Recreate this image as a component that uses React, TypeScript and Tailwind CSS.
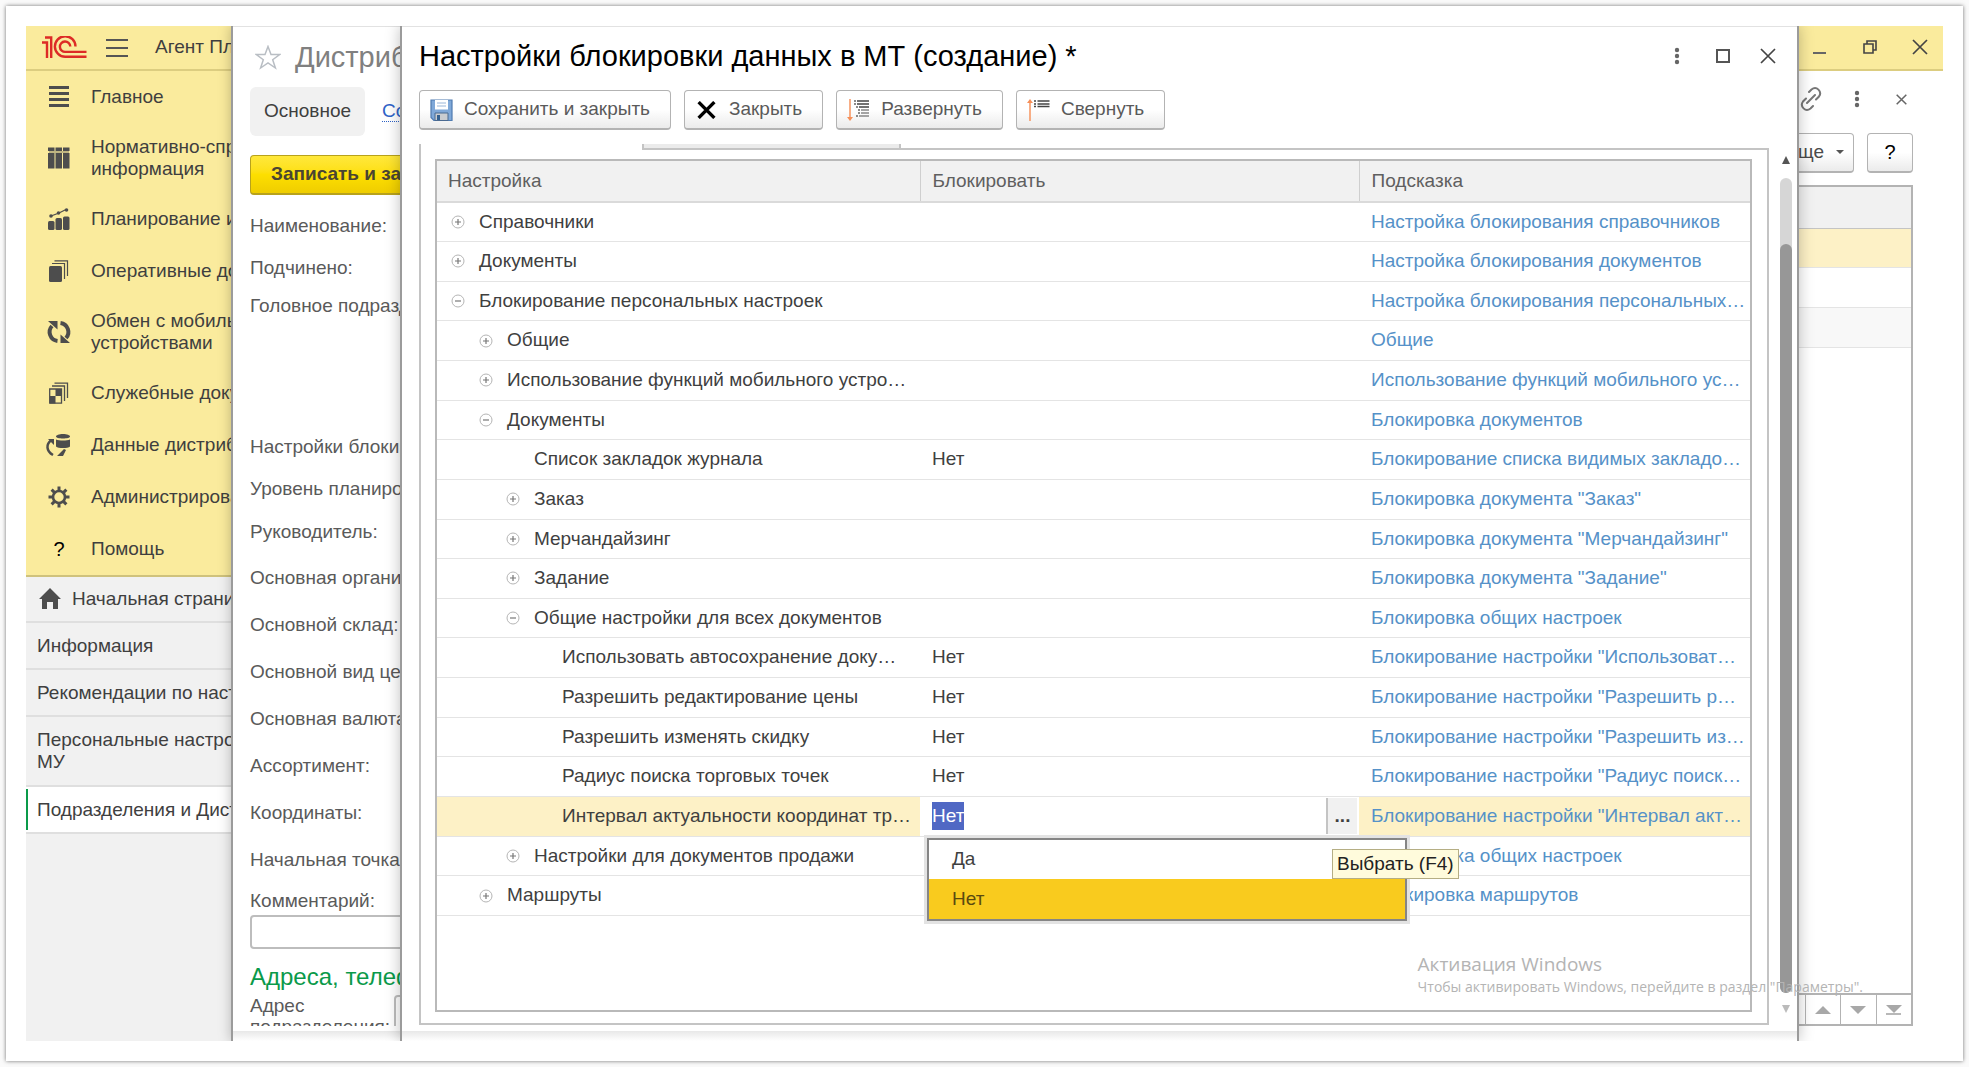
import { useEffect, useRef } from "react";
import type { ReactNode } from "react";

type Row = {
  name: string;
  level: number;
  toggle?: "plus" | "minus";
  value?: string;
  hint: string;
  editing?: boolean;
};

const rows: Row[] = [
  { name: "Справочники", level: 0, toggle: "plus", hint: "Настройка блокирования справочников" },
  { name: "Документы", level: 0, toggle: "plus", hint: "Настройка блокирования документов" },
  { name: "Блокирование персональных настроек", level: 0, toggle: "minus", hint: "Настройка блокирования персональных…" },
  { name: "Общие", level: 1, toggle: "plus", hint: "Общие" },
  { name: "Использование функций мобильного устро…", level: 1, toggle: "plus", hint: "Использование функций мобильного ус…" },
  { name: "Документы", level: 1, toggle: "minus", hint: "Блокировка документов" },
  { name: "Список закладок журнала", level: 2, value: "Нет", hint: "Блокирование списка видимых закладо…" },
  { name: "Заказ", level: 2, toggle: "plus", hint: 'Блокировка документа "Заказ"' },
  { name: "Мерчандайзинг", level: 2, toggle: "plus", hint: 'Блокировка документа "Мерчандайзинг"' },
  { name: "Задание", level: 2, toggle: "plus", hint: 'Блокировка документа "Задание"' },
  { name: "Общие настройки для всех документов", level: 2, toggle: "minus", hint: "Блокировка общих настроек" },
  { name: "Использовать автосохранение доку…", level: 3, value: "Нет", hint: 'Блокирование настройки "Использоват…' },
  { name: "Разрешить редактирование цены", level: 3, value: "Нет", hint: 'Блокирование настройки "Разрешить р…' },
  { name: "Разрешить изменять скидку", level: 3, value: "Нет", hint: 'Блокирование настройки "Разрешить из…' },
  { name: "Радиус поиска торговых точек", level: 3, value: "Нет", hint: 'Блокирование настройки "Радиус поиск…' },
  { name: "Интервал актуальности координат тр…", level: 3, value: "Нет", hint: 'Блокирование настройки "Интервал акт…', editing: true },
  { name: "Настройки для документов продажи", level: 2, toggle: "plus", hint: "Блокировка общих настроек" },
  { name: "Маршруты", level: 1, toggle: "plus", hint: "Блокировка маршрутов" },
];

const indents = ["pl-[14px]", "pl-[42px]", "pl-[69px]", "pl-[97px]"];

const formRows = [
  { label: "Наименование:", height: "h-[42px]" },
  { label: "Подчинено:", height: "h-[42px]" },
  { label: "Головное подразделение:", height: "h-[34px] mb-[103px]" },
  { label: "Настройки блокировки:", height: "h-[42px]" },
  { label: "Уровень планирования:", height: "h-[42px]" },
  { label: "Руководитель:", height: "h-[45px]" },
  { label: "Основная организация:", height: "h-[47px]" },
  { label: "Основной склад:", height: "h-[47px]" },
  { label: "Основной вид цен:", height: "h-[47px]" },
  { label: "Основная валюта:", height: "h-[47px]" },
  { label: "Ассортимент:", height: "h-[47px]" },
  { label: "Координаты:", height: "h-[47px]" },
  { label: "Начальная точка:", height: "h-[47px]" },
];

function MenuIcon({ name }: { name: string }) {
  return (
    <svg viewBox="0 0 22 22" className="h-[22px] w-[22px] shrink-0 overflow-visible text-[#4d4d4d]" fill="currentColor">
      {name === "main" && <path d="M1 0h20v3H1zM1 6h20v3H1zM1 12h20v3H1zM1 18h20v3H1z" />}
      {name === "books" && (
        <>
          <path d="M0 .500h6.500v3.500H0zM7.500.500H14v3.500H7.500zM15 .500h6.500v3.500H15z" />
          <path d="M0 6h6.500v15.500H0zM7.500 6H14v15.500H7.500zM15 6h6.500v15.500H15z" />
          <path d="M1 4h20v2H1z" opacity=".35" />
        </>
      )}
      {name === "chart" && (
        <>
          <rect x="0" y="13" width="6.500" height="9" rx="1.500" />
          <rect x="7.500" y="10" width="6.500" height="12" rx="1.500" />
          <rect x="15" y="8.500" width="6.500" height="13.500" rx="1.500" />
          <path d="M3 8l8-3 7-3.500" fill="none" stroke="currentColor" strokeWidth="1.300" />
          <circle cx="3" cy="8" r="1.800" />
          <circle cx="10.500" cy="5" r="1.800" />
          <circle cx="18.500" cy="2" r="1.800" />
        </>
      )}
      {name === "docs" && (
        <>
          <rect x="1" y="6" width="13" height="16" rx="1.500" />
          <path d="M4 3.500h12.500V19M6.500.800h13V16" fill="none" stroke="currentColor" strokeWidth="1.200" />
        </>
      )}
      {name === "sync" && (
        <>
          <path d="M9.500 20A9 9 0 0 1 4 5M12.500 2a9 9 0 0 1 5.500 15" fill="none" stroke="currentColor" strokeWidth="4" />
          <path d="M0 0h9.500v8.500zM22 22h-9.500v-8.500z" />
        </>
      )}
      {name === "service" && (
        <>
          <path d="M1.700 7h11.800v14.200H1.700zM4 4h12.500v15M6.500 1.200h13V16" fill="none" stroke="currentColor" strokeWidth="1.300" />
          <path d="M7.500 7H14v7H7.500zM2 14h5.500v7.500H2z" />
        </>
      )}
      {name === "data" && (
        <>
          <path d="M8 2.500C8 1.300 11 0 15 0s7 1.300 7 2.500S19 4.500 15 4.500 8 3.700 8 2.500z" />
          <path d="M8 5.500c3 1.300 11 1.300 14 0v7c-2 2-12 2-14 0z" />
          <path d="M5 21C-2 17-2 10 3 6.500" fill="none" stroke="currentColor" strokeWidth="2.500" />
          <path d="M0 5h6v6zM9 22l7-7 2 1-3 6z" />
        </>
      )}
      {name === "gear" && (
        <>
          <circle cx="11" cy="11" r="6" fill="none" stroke="currentColor" strokeWidth="2.600" />
          <path
            d="M11 .500v4M11 17.500v4M.500 11h4M17.500 11h4M3.600 3.600l2.800 2.800M15.600 15.600l2.800 2.800M3.600 18.400l2.800-2.800M15.600 6.400l2.800-2.800"
            stroke="currentColor"
            strokeWidth="3"
          />
        </>
      )}
      {name === "home" && <path d="M11 0l11 11h-3v10h-5v-7H8v7H3V11H0z" />}
    </svg>
  );
}

const menu = [
  { icon: "main", label: "Главное" },
  { icon: "books", label: "Нормативно-справочная", second: "информация" },
  { icon: "chart", label: "Планирование и" },
  { icon: "docs", label: "Оперативные документы" },
  { icon: "sync", label: "Обмен с мобильными", second: "устройствами" },
  { icon: "service", label: "Служебные документы" },
  { icon: "data", label: "Данные дистрибьюторов" },
  { icon: "gear", label: "Администрирование" },
  { icon: "help", label: "Помощь" },
];

function Logo() {
  return (
    <svg viewBox="0 0 45 23" className="h-[23px] w-[45px] shrink-0" fill="none" stroke="#dd2b26" strokeWidth="2.400" aria-label="1С">
      <path d="M0 6.500h5V22M3 1.500h6.200V22" />
      <path d="M33.500 10.500A10.300 10.300 0 1 0 23.500 20.800H44.500" />
      <path d="M28.300 10.500A5.200 5.200 0 1 0 23.500 15.900H44.500" />
    </svg>
  );
}

function Sidebar() {
  return (
    <aside className="flex w-[205px] shrink-0 flex-col overflow-hidden whitespace-nowrap bg-[#f1f1f1] text-[#3f3f3f]">
      <div className="flex h-[45px] shrink-0 items-center border-b-2 border-[#dccd80] bg-[#faeb9d] pl-4">
        <Logo />
        <button type="button" aria-label="Меню" className="ml-[19px] flex w-[22px] shrink-0 flex-col gap-[6px]">
          <span className="h-[2px] bg-[#555]" />
          <span className="h-[2px] bg-[#555]" />
          <span className="h-[2px] bg-[#555]" />
        </button>
        <span className="ml-[27px]">Агент Плюс</span>
      </div>
      <nav className="shrink-0 border-b-2 border-[#cfc27c] bg-[#faeb9d]">
        {menu.map((item) => (
          <a
            key={item.label}
            href="#"
            className={item.second ? "flex h-[70px] items-center gap-[21px] pl-[22px]" : "flex h-[52px] items-center gap-[21px] pl-[22px]"}
          >
            {item.icon === "help" ? (
              <span className="w-[22px] text-center text-xl text-black">?</span>
            ) : (
              <MenuIcon name={item.icon} />
            )}
            <span className="leading-[22px]">
              {item.label}
              {item.second && <span className="block">{item.second}</span>}
            </span>
          </a>
        ))}
      </nav>
      <nav className="leading-[22px]">
        <a href="#" className="flex h-[46px] items-center gap-[11px] border-b-2 border-[#dfdfdf] pl-[13px]">
          <MenuIcon name="home" />
          Начальная страница
        </a>
        <a href="#" className="flex h-[47px] items-center border-b-2 border-[#dfdfdf] pl-[11px]">Информация</a>
        <a href="#" className="flex h-[47px] items-center border-b-2 border-[#dfdfdf] pl-[11px]">Рекомендации по настройке</a>
        <a href="#" className="flex h-[70px] items-center border-b-2 border-[#dfdfdf] pl-[11px]">
          <span>
            Персональные настройки
            <span className="block">МУ</span>
          </span>
        </a>
        <a href="#" className="flex h-[47px] items-center border-b-2 border-[#dfdfdf] bg-white py-[2px]">
          <span className="flex h-full items-center border-l-2 border-[#0a9a4a] pl-[9px]">Подразделения и Дистрибьюторы</span>
        </a>
      </nav>
    </aside>
  );
}

function FormWindow() {
  return (
    <section className="z-10 flex w-[169px] shrink-0 flex-col border-l-2 border-[#9b9b9b] bg-white shadow-[0_0_12px_rgba(0,0,0,0.25)]">
      <div className="flex min-h-0 flex-1 flex-col overflow-hidden whitespace-nowrap border-t border-[#e2e2e2] pl-[17px] text-[#5a5a5a]">
        <div className="flex h-[60px] shrink-0 items-center gap-[14px] pl-[5px]">
          <svg viewBox="0 0 26 25" className="h-[25px] w-[26px] shrink-0" fill="none" stroke="#b9bec4" strokeWidth="1.500">
            <path d="M13 1.500l3 8h8.700l-7 5.200 2.700 8.300L13 18l-7.400 5 2.700-8.300-7-5.200H10z" />
          </svg>
          <h2 className="text-[29px] leading-[34px] text-[#808080]">Дистрибьютор</h2>
        </div>
        <div className="flex h-[49px] shrink-0 items-center gap-[17px]">
          <button type="button" className="h-full rounded-md bg-[#f1f1f1] px-[14px] text-[#3f3f3f]">Основное</button>
          <a href="#" className="border-b border-dotted border-[#2f63c8] leading-5 text-[#2f63c8]">Сотрудники</a>
        </div>
        <button
          type="button"
          className="mt-[19px] mb-[10px] h-[40px] w-[260px] shrink-0 rounded-[4px] border border-b-2 border-[#b8a21c] bg-gradient-to-b from-[#ffe83a] via-[#fddf00] to-[#efcd00] pl-5 text-left font-bold text-[#4a4532]"
        >
          Записать и закрыть
        </button>
        {formRows.map((row) => (
          <div key={row.label} className={`flex shrink-0 items-center ${row.height}`}>{row.label}</div>
        ))}
        <label htmlFor="comment" className="flex h-[31px] shrink-0 items-end leading-7">Комментарий:</label>
        <input id="comment" className="h-[34px] w-[300px] shrink-0 rounded-[4px] border-2 border-[#bdbdbd] px-2" />
        <h3 className="mt-3 h-8 shrink-0 text-[24px] leading-8 text-[#0a9a4a]">Адреса, телефоны</h3>
        <div className="mt-[2px] flex shrink-0 leading-[21px]">
          <label htmlFor="address" className="w-[144px] shrink-0">
            Адрес
            <span className="block">подразделения:</span>
          </label>
          <input id="address" className="h-[40px] w-[200px] shrink-0 rounded-[4px] border-2 border-[#bdbdbd]" />
        </div>
      </div>
      <div className="h-[5px] shrink-0" />
      <div className="h-[10px] shrink-0 bg-gradient-to-b from-[#e8e8e8] to-white" />
    </section>
  );
}

function ToolButton({ icon, children }: { icon: ReactNode; children: ReactNode }) {
  return (
    <button
      type="button"
      className="flex h-[40px] items-center gap-[11px] rounded-[4px] border border-b-2 border-[#b3b3b3] bg-gradient-to-b from-white via-white to-[#ebebeb] pr-5 pl-[10px] text-[#5a5a5a]"
    >
      {icon}
      {children}
    </button>
  );
}

function SaveIcon() {
  return (
    <svg viewBox="0 0 23 22" className="h-[22px] w-[23px]">
      <path d="M1 1h21v20.500H4L1 18.500z" fill="#7fa8d8" stroke="#4f7bb0" strokeWidth="1.200" />
      <path d="M5 1h13v9.500H5z" fill="#fff" />
      <path d="M7 4h9M7 7h9" stroke="#9ab6d8" />
      <path d="M5 14h13v7.500H5z" fill="#c9ccd0" stroke="#4b6a90" />
      <path d="M7 16h3v5H7z" fill="#33608f" />
    </svg>
  );
}

function ExpandIcon() {
  return (
    <svg viewBox="0 0 23 22" className="h-[22px] w-[23px]" fill="none">
      <path d="M3 0v19" stroke="#f79a68" strokeWidth="1.600" />
      <path d="M0 18h6L3 22z" fill="#f58e58" />
      <path d="M7 2h2M7 5h2M9 8h2M11 11h2M11 14h2M9 17h2" stroke="#666" strokeWidth="1.400" />
      <path d="M10 2h12M10 5h12M12 8h10" stroke="#444" strokeWidth="1.600" />
      <path d="M14 11h8M14 14h8M12 17h10" stroke="#888" strokeWidth="1.400" />
    </svg>
  );
}

function CollapseIcon() {
  return (
    <svg viewBox="0 0 23 22" className="h-[22px] w-[23px]" fill="none">
      <path d="M3 3v19" stroke="#f79a68" strokeWidth="1.600" />
      <path d="M0 4h6L3 0z" fill="#f58e58" />
      <path d="M7 2h2M7 5h2M7 7.500h2M10.500 2h12M10.500 5h12M10.500 7.500h12" stroke="#444" strokeWidth="1.600" />
    </svg>
  );
}

function CrossIcon({ className, width }: { className: string; width: number }) {
  return (
    <svg viewBox="0 0 16 16" className={className} fill="none" stroke="currentColor" strokeWidth={width}>
      <path d="M1 1l14 14M15 1L1 15" />
    </svg>
  );
}

function DotsIcon() {
  return (
    <svg viewBox="0 0 6 18" className="h-[18px] w-[6px]" fill="#666">
      <circle cx="3" cy="3" r="2.200" />
      <circle cx="3" cy="9" r="2.200" />
      <circle cx="3" cy="15" r="2.200" />
    </svg>
  );
}

function Toggle({ kind }: { kind: "plus" | "minus" }) {
  return (
    <button type="button" aria-label={kind === "plus" ? "Развернуть строку" : "Свернуть строку"} className="mr-[14px] shrink-0">
      <svg viewBox="0 0 14 14" className="block h-[14px] w-[14px]" fill="none">
        <circle cx="7" cy="7" r="6" stroke="#b5b5b5" />
        <path d={kind === "plus" ? "M4 7h6M7 4v6" : "M4 7h6"} stroke="#777" strokeWidth="1.200" />
      </svg>
    </button>
  );
}

function ValueEditor() {
  const inputRef = useRef<HTMLInputElement>(null);

  useEffect(() => {
    inputRef.current?.focus();
    inputRef.current?.select();
  }, []);

  return (
    <div className="relative flex h-[36px] items-stretch bg-white">
      <input
        ref={inputRef}
        aria-label="Блокировать"
        defaultValue="Нет"
        className="min-w-0 flex-1 pl-3 text-[#3f3f3f] caret-transparent outline-none selection:bg-[#5068c4] selection:text-white"
      />
      <button type="button" className="mr-[2px] w-[31px] border-l-2 border-[#c4c4c4] bg-[#f1f1f1] font-bold">...</button>
      <ul role="listbox" className="absolute top-[40px] left-[7px] z-20 w-[480px] border-2 border-[#858585] bg-white shadow-[0_0_0_3px_#e3e3e3]">
        <li role="option" aria-selected="false" className="flex h-[39px] items-center pl-[23px]">Да</li>
        <li role="option" aria-selected="true" className="flex h-[40px] items-center bg-[#f9cb1e] pl-[23px] text-[#5b4a10]">Нет</li>
      </ul>
      <div role="tooltip" className="absolute top-[51px] left-[412px] z-30 border border-[#b5ae84] bg-[#fffbdc] px-1 leading-7 whitespace-nowrap text-[#222]">
        Выбрать (F4)
      </div>
    </div>
  );
}

function SettingsTable() {
  return (
    <table className="h-[755px] w-full table-fixed border-collapse text-left whitespace-nowrap">
      <thead>
        <tr className="h-[41px] border-b-2 border-[#dadada] bg-[#f1f1f1] text-[#5f5f5f]">
          <th className="w-[483px] border-r border-[#cfcfcf] p-0 pl-[11px] font-normal">Настройка</th>
          <th className="w-[439px] border-r border-[#cfcfcf] p-0 pl-3 font-normal">Блокировать</th>
          <th className="p-0 pl-3 font-normal">Подсказка</th>
        </tr>
      </thead>
      <tbody>
        {rows.map((row, i) => (
          <tr key={i} className="h-[38px] border-b border-[#e4e4e4]">
            <td className={row.editing ? "bg-[#fdf1c6] p-0" : "p-0"}>
              <div className={`flex items-center overflow-hidden ${indents[row.level]}`}>
                {row.toggle ? <Toggle kind={row.toggle} /> : <span className="w-7 shrink-0" />}
                {row.name}
              </div>
            </td>
            <td className={row.editing ? "p-0" : "p-0 pl-3"}>{row.editing ? <ValueEditor /> : row.value}</td>
            <td className={row.editing ? "overflow-hidden bg-[#fdf1c6] p-0 pl-3" : "overflow-hidden p-0 pl-3"}>
              <a href="#" className="text-[#5591c8]">{row.hint}</a>
            </td>
          </tr>
        ))}
      </tbody>
    </table>
  );
}

function SettingsWindow() {
  return (
    <main className="z-20 flex min-w-0 flex-1 flex-col border-x-2 border-l-[#9b9b9b] border-r-[#9b9b9b] bg-white shadow-[0_0_14px_rgba(0,0,0,0.25)]">
      <div className="flex min-h-0 flex-1 flex-col border-t border-[#e2e2e2] pl-[17px]">
        <header className="mb-[5px] flex h-[58px] shrink-0 items-center pr-[21px]">
          <h1 className="flex-1 text-[29px] leading-[34px] text-black">Настройки блокировки данных в МТ (создание) *</h1>
          <button type="button" aria-label="Ещё"><DotsIcon /></button>
          <button type="button" aria-label="Развернуть окно" className="ml-9 h-[14px] w-[14px] border-2 border-[#555]" />
          <button type="button" aria-label="Закрыть окно" className="ml-[30px] text-[#444]">
            <CrossIcon className="h-4 w-4" width={1.7} />
          </button>
        </header>
        <div className="flex shrink-0 gap-[13px]">
          <ToolButton icon={<SaveIcon />}>Сохранить и закрыть</ToolButton>
          <ToolButton icon={<CrossIcon className="h-[18px] w-[23px] text-black" width={3} />}>Закрыть</ToolButton>
          <ToolButton icon={<ExpandIcon />}>Развернуть</ToolButton>
          <ToolButton icon={<CollapseIcon />}>Свернуть</ToolButton>
        </div>
        <div className="mt-[14px] mb-[6px] flex min-h-0 flex-1 gap-[11px] pr-[5px]">
          <div className="flex min-w-0 flex-1 flex-col">
            {/* bottom edge of the page tabs */}
            <div className="flex h-[6px] shrink-0">
              <div className="w-[223px] border-l-2 border-[#c4c4c4]" />
              <div className="w-[259px] border-x-2 border-b-2 border-[#c4c4c4] bg-[#ebebeb]" />
              <div className="flex-1 border-b-2 border-[#c4c4c4]" />
            </div>
            <div className="flex min-h-0 flex-1 border-x-2 border-b-2 border-[#c4c4c4] pt-[9px] pr-[15px] pb-[11px] pl-[14px]">
              <div className="w-full border-2 border-[#b9b9b9]">
                <SettingsTable />
              </div>
            </div>
          </div>
          <div className="flex w-3 shrink-0 flex-col items-center pt-[12px] pb-[12px]">
            <span className="border-x-4 border-b-8 border-x-transparent border-b-[#555]" />
            <div className="mt-[14px] mb-[12px] flex w-full flex-1 flex-col rounded-full bg-[#d6d6d6] pt-[66px]">
              <div className="flex-1 rounded-full bg-[#979797]" />
            </div>
            <span className="border-x-4 border-t-8 border-x-transparent border-t-[#bbb]" />
          </div>
        </div>
      </div>
      <div className="h-[10px] shrink-0 bg-gradient-to-b from-[#e8e8e8] to-white" />
    </main>
  );
}

function RightColumn() {
  return (
    <aside className="flex w-[144px] shrink-0 flex-col bg-white">
      <div className="flex h-[45px] shrink-0 items-center justify-end border-b-2 border-[#dccd80] bg-[#faeb9d] pr-[15px] pb-[2px] text-[#444]">
        <button type="button" aria-label="Свернуть приложение" className="mt-3 h-[2px] w-[13px] bg-[#666]" />
        <button type="button" aria-label="Восстановить" className="ml-[37px]">
          <svg viewBox="0 0 14 14" className="h-[14px] w-[14px]" fill="none" stroke="currentColor" strokeWidth="1.600">
            <path d="M1 4h9v9H1zM4 4V1h9v9h-3" />
          </svg>
        </button>
        <button type="button" aria-label="Закрыть приложение" className="ml-[35px]">
          <CrossIcon className="h-4 w-4" width={1.7} />
        </button>
      </div>
      <div className="flex h-[56px] shrink-0 items-center text-[#666]">
        <svg viewBox="0 0 24 24" className="h-6 w-6" fill="none" stroke="#777" strokeWidth="2" strokeLinecap="round">
          <path d="M10 5l2.500-2.500c5-4 11 2 7.500 7l-3 3M14 19l-2.500 2.500c-5 4-11-2-7.500-7l3-3M8 16l8-8" />
        </svg>
        <span className="ml-[31px] flex"><DotsIcon /></span>
        <button type="button" aria-label="Закрыть вкладку" className="ml-[36px]">
          <CrossIcon className="h-[11px] w-[11px]" width={2.2} />
        </button>
      </div>
      <div className="flex h-[46px] shrink-0 items-center gap-[13px] pt-[5px]">
        <button
          type="button"
          className="flex h-[40px] w-[55px] items-center justify-end gap-3 overflow-hidden rounded-r-[4px] border border-b-2 border-l-0 border-[#b3b3b3] bg-gradient-to-b from-white via-white to-[#ebebeb] pr-[9px] text-[#4a4a4a]"
        >
          Еще
          <span className="border-x-4 border-t-4 border-x-transparent border-t-[#555]" />
        </button>
        <button type="button" className="h-[40px] w-[46px] rounded-[4px] border border-b-2 border-[#b3b3b3] bg-gradient-to-b from-white via-white to-[#ebebeb] text-xl text-black">
          ?
        </button>
      </div>
      <div className="mt-3 mr-[30px] mb-[15px] flex flex-1 flex-col border-2 border-l-0 border-[#b3b3b3]">
        <div className="h-[42px] border-b border-[#c4c4c4] bg-[#f1f1f1]" />
        <div className="h-[38px] bg-[#fdf1c6]" />
        <div className="h-[41px] border-y border-[#e4e4e4]" />
        <div className="h-[40px] border-b border-[#e4e4e4] bg-[#f8f8f8]" />
        <div className="flex-1" />
        <div className="flex h-[31px] items-stretch border-t-2 border-[#b3b3b3]">
          <div className="w-[6px]" />
          <button type="button" aria-label="Вверх" className="flex flex-1 items-center justify-center border-l border-[#b3b3b3]">
            <span className="border-x-8 border-b-8 border-x-transparent border-b-[#a8a8a8]" />
          </button>
          <button type="button" aria-label="Вниз" className="flex flex-1 items-center justify-center border-l border-[#b3b3b3]">
            <span className="border-x-8 border-t-8 border-x-transparent border-t-[#a8a8a8]" />
          </button>
          <button type="button" aria-label="В конец" className="flex flex-1 flex-col items-center justify-center border-l border-[#b3b3b3]">
            <span className="border-x-8 border-t-8 border-x-transparent border-t-[#a8a8a8]" />
            <span className="h-[2px] w-[15px] bg-[#b8b8b8]" />
          </button>
        </div>
      </div>
    </aside>
  );
}

export default function App() {
  return (
    <div className="flex h-screen bg-[#fafafa] p-[6px] font-['Liberation_Sans',Arial,sans-serif] text-[19px] text-[#3f3f3f]">
      <div className="relative flex min-w-0 flex-1 bg-white p-5 shadow-[0_0_4px_rgba(0,0,0,0.55)]">
        <div className="flex min-w-0 flex-1 overflow-hidden">
          <Sidebar />
          <FormWindow />
          <SettingsWindow />
          <RightColumn />
        </div>
        <div className="pointer-events-none absolute right-[100px] bottom-[64px] z-40 font-['Open_Sans','Noto_Sans',sans-serif] text-[#b4b4b4]">
          <p className="text-[19px] leading-[26px]">Активация Windows</p>
          <p className="text-[14px] leading-5">Чтобы активировать Windows, перейдите в раздел "Параметры".</p>
        </div>
      </div>
    </div>
  );
}
